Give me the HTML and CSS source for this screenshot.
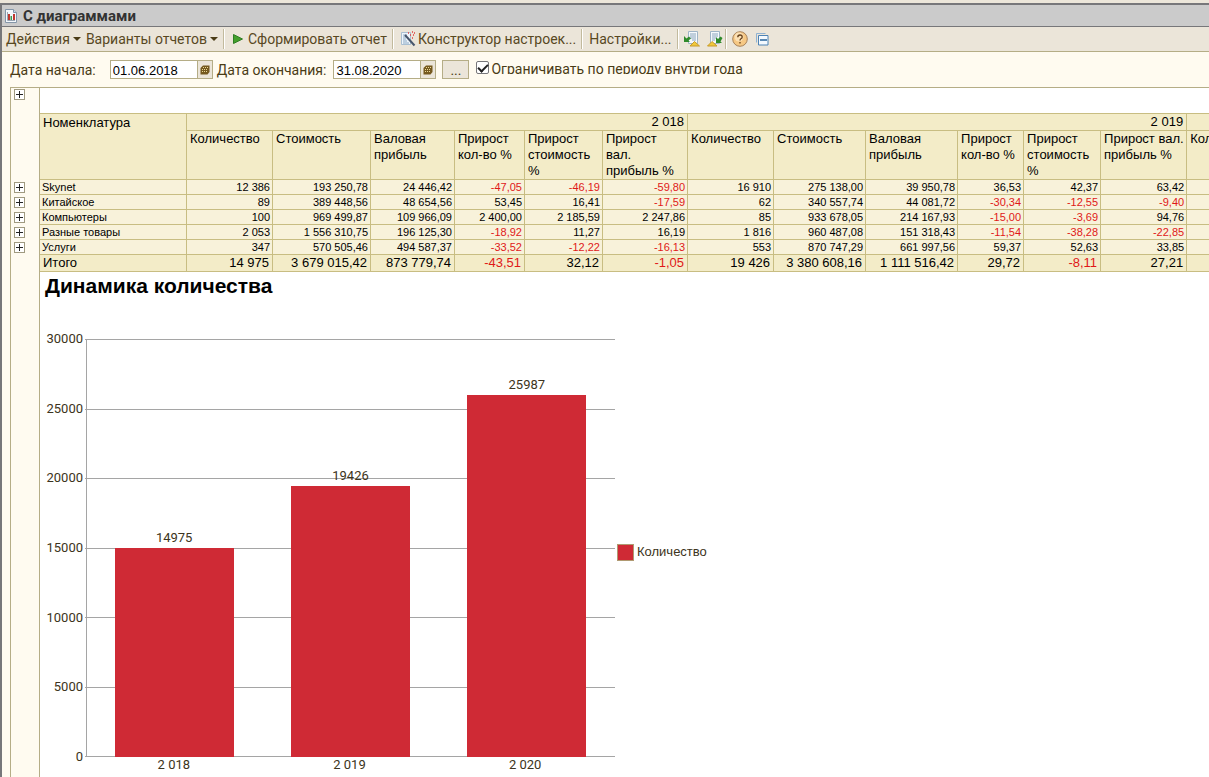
FILE: index.html
```html
<!DOCTYPE html>
<html lang="ru">
<head>
<meta charset="utf-8">
<title>С диаграммами</title>
<link rel="stylesheet" href="styles.css">
</head>
<body>
<div class="window">
  <header class="titlebar">
    <svg class="icon-doc" viewBox="0 0 12 14"><path d="M.5.5h8l3 3v10h-11z" fill="#f4f8fc" stroke="#8496a8"/><path d="M8.500.5v3h3" fill="#cfdbe8" stroke="#8496a8"/><path d="M2.500 3v8.500H10" fill="none" stroke="#9aa6b4"/><path d="M3 5h2v6H3z" fill="#c0392f"/><path d="M5.500 7h1.500v4H5.500z" fill="#3c9a50"/><path d="M8 5h2v6H8z" fill="#c0392f"/></svg>
    <h1>С диаграммами</h1>
  </header>
  <nav class="toolbar">
    <button class="tool">Действия <i class="caret"></i></button>
    <button class="tool">Варианты отчетов <i class="caret"></i></button>
    <span class="sep"></span>
    <button class="tool run"><svg viewBox="0 0 10 10" width="10" height="10"><path d="M.5.5 9.500 5 .5 9.500z" fill="#43a02c" stroke="#2f7d25"/></svg>Сформировать отчет</button>
    <span class="sep"></span>
    <button class="tool build"><svg viewBox="0 0 16 16" width="16" height="16"><path d="M1.500 1.500h9v12h-9z" fill="#eef5fb" stroke="#a9bfd2"/><path d="M3 4h4M3 6h3M3 8h3M3 10h4M3 12h6" stroke="#8aa8c4"/><path d="m5 4 9.500 10.500" stroke="#47566c" stroke-width="2"/><path d="M8 2h1M12 1h1M10 4h1M13 4h1M12 7h1M14 2h1" stroke="#e04040" stroke-width="1.500"/></svg>Конструктор настроек...</button>
    <span class="sep"></span>
    <button class="tool settings">Настройки...</button>
    <span class="sep"></span>
    <button class="tool icon" aria-label="Загрузить"><svg viewBox="0 0 16 16" width="16" height="16"><path d="M4.500.5h9v12h-9z" fill="#f5f9fc" stroke="#9fb4c6"/><path d="M6 3h6M6 5h6M6 7h6M8 9h4" stroke="#8aa5bd"/><path d="M0 5v6h6L4.500 9.500 7 7.500l-2-2-2.500 2z" fill="#2f8a2b"/><path d="m6 15 4.500-4.500L15.500 15z" fill="#f0c83c" stroke="#c79a28"/></svg></button>
    <button class="tool icon" aria-label="Выгрузить"><svg viewBox="0 0 16 16" width="16" height="16"><path d="M3.500.5h9v12h-9z" fill="#f5f9fc" stroke="#9fb4c6"/><path d="M5 3h6M5 5h6M5 7h4M5 9h3" stroke="#8aa5bd"/><path d="M9 6v6h6l-1.500-1.500L15.500 7l-2-1.500L11 8z" fill="#2f8a2b"/><path d="m.5 15 4.500-4.500L10 15z" fill="#f0c83c" stroke="#c79a28"/></svg></button>
    <span class="sep"></span>
    <button class="tool icon" aria-label="Справка"><svg viewBox="0 0 16 16" width="16" height="16"><circle cx="8" cy="8" r="7.300" fill="#f6c884" stroke="#a8835a"/><circle cx="7" cy="6" r="4.500" fill="#fbe0b4"/><path d="M5.800 6.200q0-2.200 2.200-2.200t2.200 1.900q0 1.200-1.300 1.900-.9.500-.9 1.700M8 11v1.500" fill="none" stroke="#65401c" stroke-width="1.300"/></svg></button>
    <button class="tool icon" aria-label="Свернуть"><svg viewBox="0 0 14 14" width="14" height="14"><path d="M1.500 10.500v-9h9" fill="none" stroke="#8fb2d2"/><path d="M3.500 3.500h9.500v9.500H3.500z" fill="#f3f9ff" stroke="#4d83b5"/><path d="M5 8h7" stroke="#24629a" stroke-width="1.500"/></svg></button>
  </nav>
  <form class="filters">
    <label for="from">Дата начала:</label>
    <span class="date first"><input id="from" type="text" value="01.06.2018"><button type="button" aria-label="Календарь"><svg viewBox="0 0 10 10" width="10" height="10"><path d="M3 .5h6.500v6.500L7.500 9.500H.5V3z" fill="#75591f"/><path d="M3 2h1v1H3zM5 2h1v1H5zM7 2h1v1H7zM2 4h1v1H2zM4 4h1v1H4zM6 4h1v1H6zM2 6h1v1H2zM4 6h1v1H4zM6 6h1v1H6z" fill="#ead998"/></svg></button></span>
    <label for="to">Дата окончания:</label>
    <span class="date"><input id="to" type="text" value="31.08.2020"><button type="button" aria-label="Календарь"><svg viewBox="0 0 10 10" width="10" height="10"><path d="M3 .5h6.500v6.500L7.500 9.500H.5V3z" fill="#75591f"/><path d="M3 2h1v1H3zM5 2h1v1H5zM7 2h1v1H7zM2 4h1v1H2zM4 4h1v1H4zM6 4h1v1H6zM2 6h1v1H2zM4 6h1v1H4zM6 6h1v1H6z" fill="#ead998"/></svg></button></span>
    <button type="button" class="more">...</button>
    <input class="check" id="limit" type="checkbox" checked><label class="clipped" for="limit">Ограничивать по периоду внутри года</label>
  </form>
  <main class="report">
    <aside class="outline">
      <button class="plus top" aria-label="Развернуть все"></button>
      <button class="plus" aria-label="Развернуть Skynet"></button>
      <button class="plus" aria-label="Развернуть Китайское"></button>
      <button class="plus" aria-label="Развернуть Компьютеры"></button>
      <button class="plus" aria-label="Развернуть Разные товары"></button>
      <button class="plus" aria-label="Развернуть Услуги"></button>
    </aside>
    <section class="sheet">
      <table>
        <colgroup><col class="w147"><col class="w86"><col class="w98"><col class="w84"><col class="w70"><col class="w78"><col class="w85"><col class="w86"><col class="w92"><col class="w92"><col class="w66"><col class="w77"><col class="w86"><col class="w86"></colgroup>
        <thead>
          <tr class="years"><th rowspan="2">Номенклатура</th><th colspan="6" class="year">2 018</th><th colspan="6" class="year">2 019</th><th></th></tr>
          <tr class="heads"><th>Количество</th><th>Стоимость</th><th>Валовая прибыль</th><th>Прирост кол-во %</th><th>Прирост стоимость %</th><th>Прирост вал. прибыль %</th><th>Количество</th><th>Стоимость</th><th>Валовая прибыль</th><th>Прирост кол-во %</th><th>Прирост стоимость %</th><th>Прирост вал. прибыль %</th><th>Количество</th></tr>
        </thead>
        <tbody>
          <tr><td>Skynet</td><td>12 386</td><td>193 250,78</td><td>24 446,42</td><td class="neg">-47,05</td><td class="neg">-46,19</td><td class="neg">-59,80</td><td>16 910</td><td>275 138,00</td><td>39 950,78</td><td>36,53</td><td>42,37</td><td>63,42</td><td></td></tr>
          <tr><td>Китайское</td><td>89</td><td>389 448,56</td><td>48 654,56</td><td>53,45</td><td>16,41</td><td class="neg">-17,59</td><td>62</td><td>340 557,74</td><td>44 081,72</td><td class="neg">-30,34</td><td class="neg">-12,55</td><td class="neg">-9,40</td><td></td></tr>
          <tr><td>Компьютеры</td><td>100</td><td>969 499,87</td><td>109 966,09</td><td>2 400,00</td><td>2 185,59</td><td>2 247,86</td><td>85</td><td>933 678,05</td><td>214 167,93</td><td class="neg">-15,00</td><td class="neg">-3,69</td><td>94,76</td><td></td></tr>
          <tr><td>Разные товары</td><td>2 053</td><td>1 556 310,75</td><td>196 125,30</td><td class="neg">-18,92</td><td>11,27</td><td>16,19</td><td>1 816</td><td>960 487,08</td><td>151 318,43</td><td class="neg">-11,54</td><td class="neg">-38,28</td><td class="neg">-22,85</td><td></td></tr>
          <tr><td>Услуги</td><td>347</td><td>570 505,46</td><td>494 587,37</td><td class="neg">-33,52</td><td class="neg">-12,22</td><td class="neg">-16,13</td><td>553</td><td>870 747,29</td><td>661 997,56</td><td>59,37</td><td>52,63</td><td>33,85</td><td></td></tr>
        </tbody>
        <tfoot>
          <tr><td>Итого</td><td>14 975</td><td>3 679 015,42</td><td>873 779,74</td><td class="neg">-43,51</td><td>32,12</td><td class="neg">-1,05</td><td>19 426</td><td>3 380 608,16</td><td>1 111 516,42</td><td>29,72</td><td class="neg">-8,11</td><td>27,21</td><td></td></tr>
        </tfoot>
      </table>
      <h2>Динамика количества</h2>
      <div class="chart">
        <div class="scale"><span>30000</span><span>25000</span><span>20000</span><span>15000</span><span>10000</span><span>5000</span><span>0</span></div>
        <div class="plot">
          <div class="grid"><i></i><i></i><i></i><i></i><i></i><i></i><i></i></div>
          <div class="bars">
            <div class="item"><span>14975</span><div class="bar" style="height:49.9%"></div></div>
            <div class="item"><span>19426</span><div class="bar" style="height:64.8%"></div></div>
            <div class="item"><span>25987</span><div class="bar" style="height:86.6%"></div></div>
          </div>
        </div>
        <div class="legend"><i></i>Количество</div>
        <div class="names"><span>2 018</span><span>2 019</span><span>2 020</span></div>
      </div>
    </section>
  </main>
</div>
</body>
</html>
```
FILE: styles.css
```css
* { box-sizing: border-box; }
body {
  margin: 0;
  height: 100vh;
  overflow: hidden;
  background: #ece6da;
  font-family: "Liberation Sans", Arial, sans-serif;
  font-size: 13px;
  color: #000;
}
button { font: inherit; color: inherit; margin: 0; padding: 0; border: 0; background: none; }
.window {
  margin-top: 3px;
  height: 100%;
  border-top: 2px solid #77777a;
  border-left: 2px solid #77777a;
  background: #fffbf0;
  display: flex;
  flex-direction: column;
}
.titlebar {
  height: 22px;
  flex: none;
  display: flex;
  align-items: center;
  gap: 6px;
  padding-left: 3px;
  background: #cbcbcb;
  border-bottom: 1px solid #77777a;
}
.icon-doc { width: 12px; height: 14px; }
h1 { margin: 0; font: bold 15px/20px Roboto, sans-serif; color: #333; }
.toolbar {
  height: 25px;
  flex: none;
  display: flex;
  align-items: center;
  padding-left: 4px;
  background: #ebe5d9;
  border-bottom: 1px solid #b5ad86;
  font-family: Roboto, sans-serif;
  font-size: 14px;
  color: #58481f;
}
.tool { display: flex; align-items: center; white-space: nowrap; margin-right: 5px; }
.caret { margin-left: 3px; border: 4px solid transparent; border-top-color: #4a3c16; border-bottom: 0; }
.sep { width: 2px; height: 20px; border-left: 1px solid #c2ba9d; border-right: 1px solid #fff; }
.run { margin-left: 8px; gap: 5px; }
.build { margin-left: 6px; gap: 2px; }
.settings { margin-left: 6px; }
.icon { margin: 0 2px 0 5px; }
.filters {
  height: 35px;
  flex: none;
  display: flex;
  align-items: center;
  padding-left: 8px;
  font-family: Roboto, sans-serif;
  font-size: 14px;
  color: #4a3c16;
}
.date { display: flex; width: 103px; height: 19px; margin: 0 6px 0 7px; border: 1px solid #b5ad86; background: #fff; }
.date.first { margin: 0 4px 0 14px; }
.date input { flex: 1; min-width: 0; border: 0; padding: 2px 0 0 2px; background: none; font: 13px "Liberation Sans", Arial, sans-serif; color: #000; }
.date button { width: 15px; border-left: 1px solid #b5ad86; background: #ebe5d9; display: flex; align-items: center; justify-content: center; }
.more { width: 27px; height: 19px; border: 1px solid #b5ad86; background: #ebe5d9; }
.check {
  appearance: none;
  width: 13px;
  height: 13px;
  margin: 0 2px 4px 7px;
  border: 1px solid #77777a;
  border-radius: 2px;
  background: #fff;
  display: grid;
  place-items: center;
}
.check:checked::before { content: ""; width: 8px; height: 4px; margin-bottom: 2px; border: solid #222; border-width: 0 0 2px 2px; transform: rotate(-45deg); }
.clipped { height: 13px; line-height: 16px; margin-bottom: 4px; overflow: hidden; }
.report { flex: 1; min-height: 0; margin-left: 8px; border: solid #b5ad86; border-width: 1px 0 0 1px; display: flex; }
.outline { width: 29px; flex: none; padding: 1px 3px; border-right: 1px solid #b5ad86; display: flex; flex-direction: column; gap: 4px; }
.plus {
  width: 11px;
  height: 11px;
  flex: none;
  border: 1px solid #a09a80;
  background:
    linear-gradient(#222, #222) center / 7px 1px no-repeat,
    linear-gradient(#222, #222) center / 1px 7px no-repeat, #fff;
}
.plus.top { margin-bottom: 78px; }
.sheet { flex: 1; min-width: 0; overflow: hidden; padding-top: 25px; background: #fff; }
table { width: 1233px; margin-left: -1px; table-layout: fixed; border-collapse: collapse; }
.w147 { width: 147px; } .w86 { width: 86px; } .w98 { width: 98px; } .w84 { width: 84px; }
.w70 { width: 70px; } .w78 { width: 78px; } .w85 { width: 85px; } .w92 { width: 92px; }
.w66 { width: 66px; } .w77 { width: 77px; }
th, td { border: 1px solid #c8bd82; }
th { padding: 1px 2px 0 3px; font-weight: normal; text-align: left; vertical-align: top; line-height: 16px; background: #f3ecc8; }
th.year { text-align: right; padding: 0 3px 0 0; }
.years { height: 17px; }
.heads { height: 49px; }
.heads th { padding-top: 0; }
tbody td { height: 15px; padding: 0 2px; font-size: 11px; line-height: 14px; text-align: right; background: #f8f2da; white-space: nowrap; }
tfoot td { height: 17px; padding: 0 3px; line-height: 16px; text-align: right; background: #f3ecc8; white-space: nowrap; }
tbody td:first-child, tfoot td:first-child { text-align: left; }
td.neg { color: #e01818; }
h2 { margin: 2px 0 0 5px; font-size: 21px; line-height: 24px; }
.chart {
  margin: 33px 0 0 3px;
  display: grid;
  grid-template-columns: 43px 529px auto;
  grid-template-rows: 434px 16px;
  font-family: Roboto, sans-serif;
  font-size: 13px;
  line-height: 16px;
  color: #3c3420;
}
.scale { display: flex; flex-direction: column; justify-content: space-between; text-align: right; padding-right: 3px; }
.plot { display: grid; margin: 8px 0; border-left: 1px solid #a5a5a5; }
.grid, .bars { grid-area: 1 / 1; }
.grid { display: flex; flex-direction: column; justify-content: space-between; margin-left: -2px; }
.grid i { height: 1px; background: #a5a5a5; }
.bars { display: flex; margin-left: -1px; }
.item { flex: 1; display: flex; flex-direction: column; justify-content: flex-end; align-items: center; }
.bar { width: 119px; background: #cf2a35; }
.item span { line-height: 20px; }
.legend { align-self: center; display: flex; align-items: center; gap: 3px; margin: 8px 0 0 2px; font-family: "Liberation Sans", Arial, sans-serif; }
.legend i { width: 17px; height: 17px; border: 1px solid #b09a72; background: #cf2a35; }
.names { grid-column: 2; display: flex; margin: -8px 2px 0 0; text-align: center; }
.names span { flex: 1; }
```
